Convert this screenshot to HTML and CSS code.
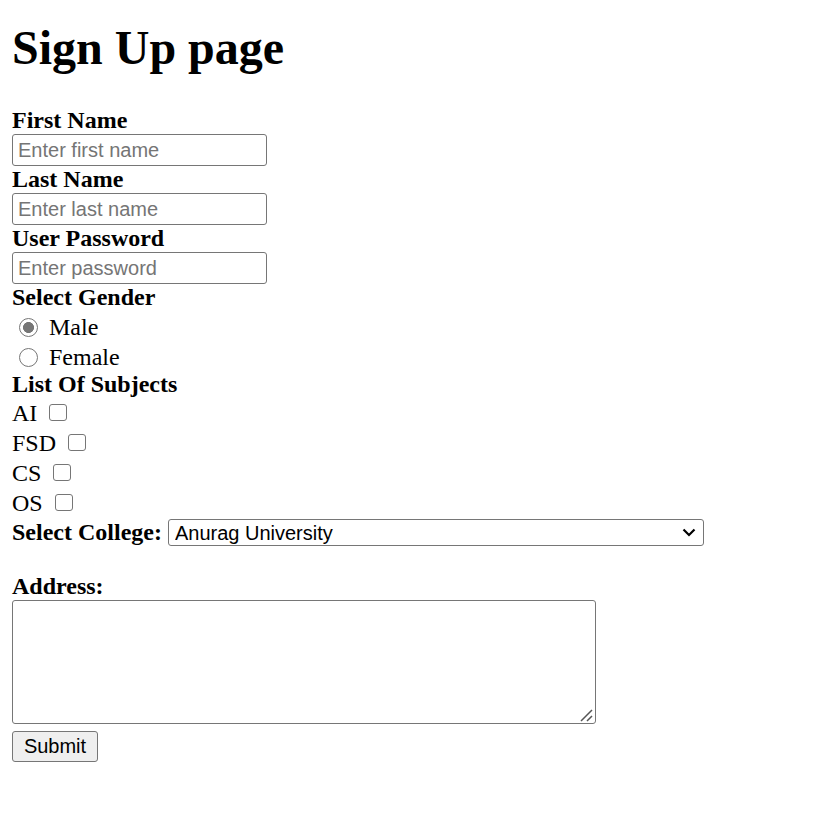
FILE: index.html
```html
<!DOCTYPE html>
<html lang="en">
<head>
<meta charset="utf-8">
<title>Sign Up page</title>
<link rel="stylesheet" href="styles.css">
</head>
<body>
<h1 class="title">Sign Up page</h1>
<form class="signup">
  <label class="field-label" for="fname">First Name</label>
  <input class="text-input" id="fname" type="text" placeholder="Enter first name">
  <label class="field-label" for="lname">Last Name</label>
  <input class="text-input" id="lname" type="text" placeholder="Enter last name">
  <label class="field-label" for="pwd">User Password</label>
  <input class="text-input" id="pwd" type="password" placeholder="Enter password">
  <div class="field-label">Select Gender</div>
  <label class="radio-row"><input class="radio" type="radio" name="gender" checked><span>Male</span></label>
  <label class="radio-row"><input class="radio" type="radio" name="gender"><span>Female</span></label>
  <div class="field-label">List Of Subjects</div>
  <label class="check-row"><span>AI</span><input class="check" type="checkbox"></label>
  <label class="check-row"><span>FSD</span><input class="check" type="checkbox"></label>
  <label class="check-row"><span>CS</span><input class="check" type="checkbox"></label>
  <label class="check-row"><span>OS</span><input class="check" type="checkbox"></label>
  <div class="college-row">
    <label class="inline-label" for="college">Select College:</label>
    <div class="select-wrap">
      <select class="select" id="college">
        <option>Anurag University</option>
        <option>Other College</option>
      </select>
      <svg class="chevron" width="14" height="9" viewBox="0 0 14 9" aria-hidden="true"><path d="M1.5 1.5 L7 7 L12.5 1.5" fill="none" stroke="#000" stroke-width="2.2"/></svg>
    </div>
  </div>
  <div class="spacer"></div>
  <label class="field-label" for="addr">Address:</label>
  <div class="textarea-wrap">
    <textarea class="textarea" id="addr"></textarea>
    <svg class="grip" width="13" height="13" viewBox="0 0 13 13" aria-hidden="true"><path d="M1 12 L12 1 M7 12 L12 7" fill="none" stroke="#555" stroke-width="1.5"/></svg>
  </div>
  <button class="submit" type="submit">Submit</button>
</form>
</body>
</html>
```
FILE: styles.css
```css
html, body {
  background: #fff;
}
body {
  margin: 0;
  padding: 0 12px;
  font-family: "Liberation Serif", "Times New Roman", serif;
  font-size: 24px;
  color: #000;
}
.title {
  font-size: 48px;
  font-weight: bold;
  margin: 20px 0 32px;
  line-height: 55px;
}
.signup {
  display: flex;
  flex-direction: column;
  align-items: flex-start;
}
.field-label {
  display: block;
  font-weight: bold;
  line-height: 27px;
  height: 27px;
}
.text-input {
  box-sizing: border-box;
  width: 255px;
  height: 32px;
  margin: 0;
  padding: 0 5px;
  border: 1px solid #767676;
  border-radius: 3px;
  font-family: "Liberation Sans", Arial, sans-serif;
  font-size: 20px;
  color: #000;
  background: #fff;
}
.text-input::placeholder {
  color: #757575;
}
.radio-row {
  display: flex;
  align-items: center;
  height: 30px;
  line-height: 30px;
}
.radio-row span {
  position: relative;
  top: 1px;
}
.radio {
  appearance: none;
  -webkit-appearance: none;
  box-sizing: border-box;
  width: 19px;
  height: 19px;
  margin: 2px 11px 0 7px;
  border: 1.5px solid #767676;
  border-radius: 50%;
  background: #fff;
}
.radio:checked {
  border-color: #767676;
  background: radial-gradient(circle, #767676 0 5.2px, #fff 5.8px);
}
.check-row {
  display: flex;
  align-items: center;
  height: 30px;
  line-height: 30px;
}
.check {
  appearance: none;
  -webkit-appearance: none;
  box-sizing: border-box;
  width: 18px;
  height: 17px;
  margin: -2px 0 0 12px;
  border: 1.5px solid #767676;
  border-radius: 3px;
  background: #fff;
}
.college-row {
  display: flex;
  align-items: center;
  height: 28px;
  gap: 6px;
}
.inline-label {
  font-weight: bold;
  line-height: 28px;
}
.select-wrap {
  position: relative;
  display: flex;
}
.select {
  appearance: none;
  -webkit-appearance: none;
  box-sizing: border-box;
  width: 536px;
  height: 27px;
  margin: 1px 0 0;
  padding: 0 30px 0 6px;
  border: 1px solid #767676;
  border-radius: 3px;
  background: #fff;
  font-family: "Liberation Sans", Arial, sans-serif;
  font-size: 20px;
  color: #000;
}
.chevron {
  position: absolute;
  right: 8px;
  top: 10px;
  pointer-events: none;
}
.spacer {
  height: 27px;
}
.textarea-wrap {
  position: relative;
  display: flex;
}
.textarea {
  box-sizing: border-box;
  width: 584px;
  height: 124px;
  margin: 0;
  padding: 3px;
  border: 1px solid #767676;
  border-radius: 3px;
  font-family: "Liberation Mono", monospace;
  font-size: 20px;
  background: #fff;
  resize: none;
}
.grip {
  position: absolute;
  right: 3px;
  bottom: 2px;
  pointer-events: none;
}
.submit {
  box-sizing: border-box;
  margin-top: 7px;
  width: 86px;
  height: 31px;
  padding: 0;
  border: 1px solid #767676;
  border-radius: 3px;
  background: #efefef;
  font-family: "Liberation Sans", Arial, sans-serif;
  font-size: 20px;
  color: #000;
}
```
